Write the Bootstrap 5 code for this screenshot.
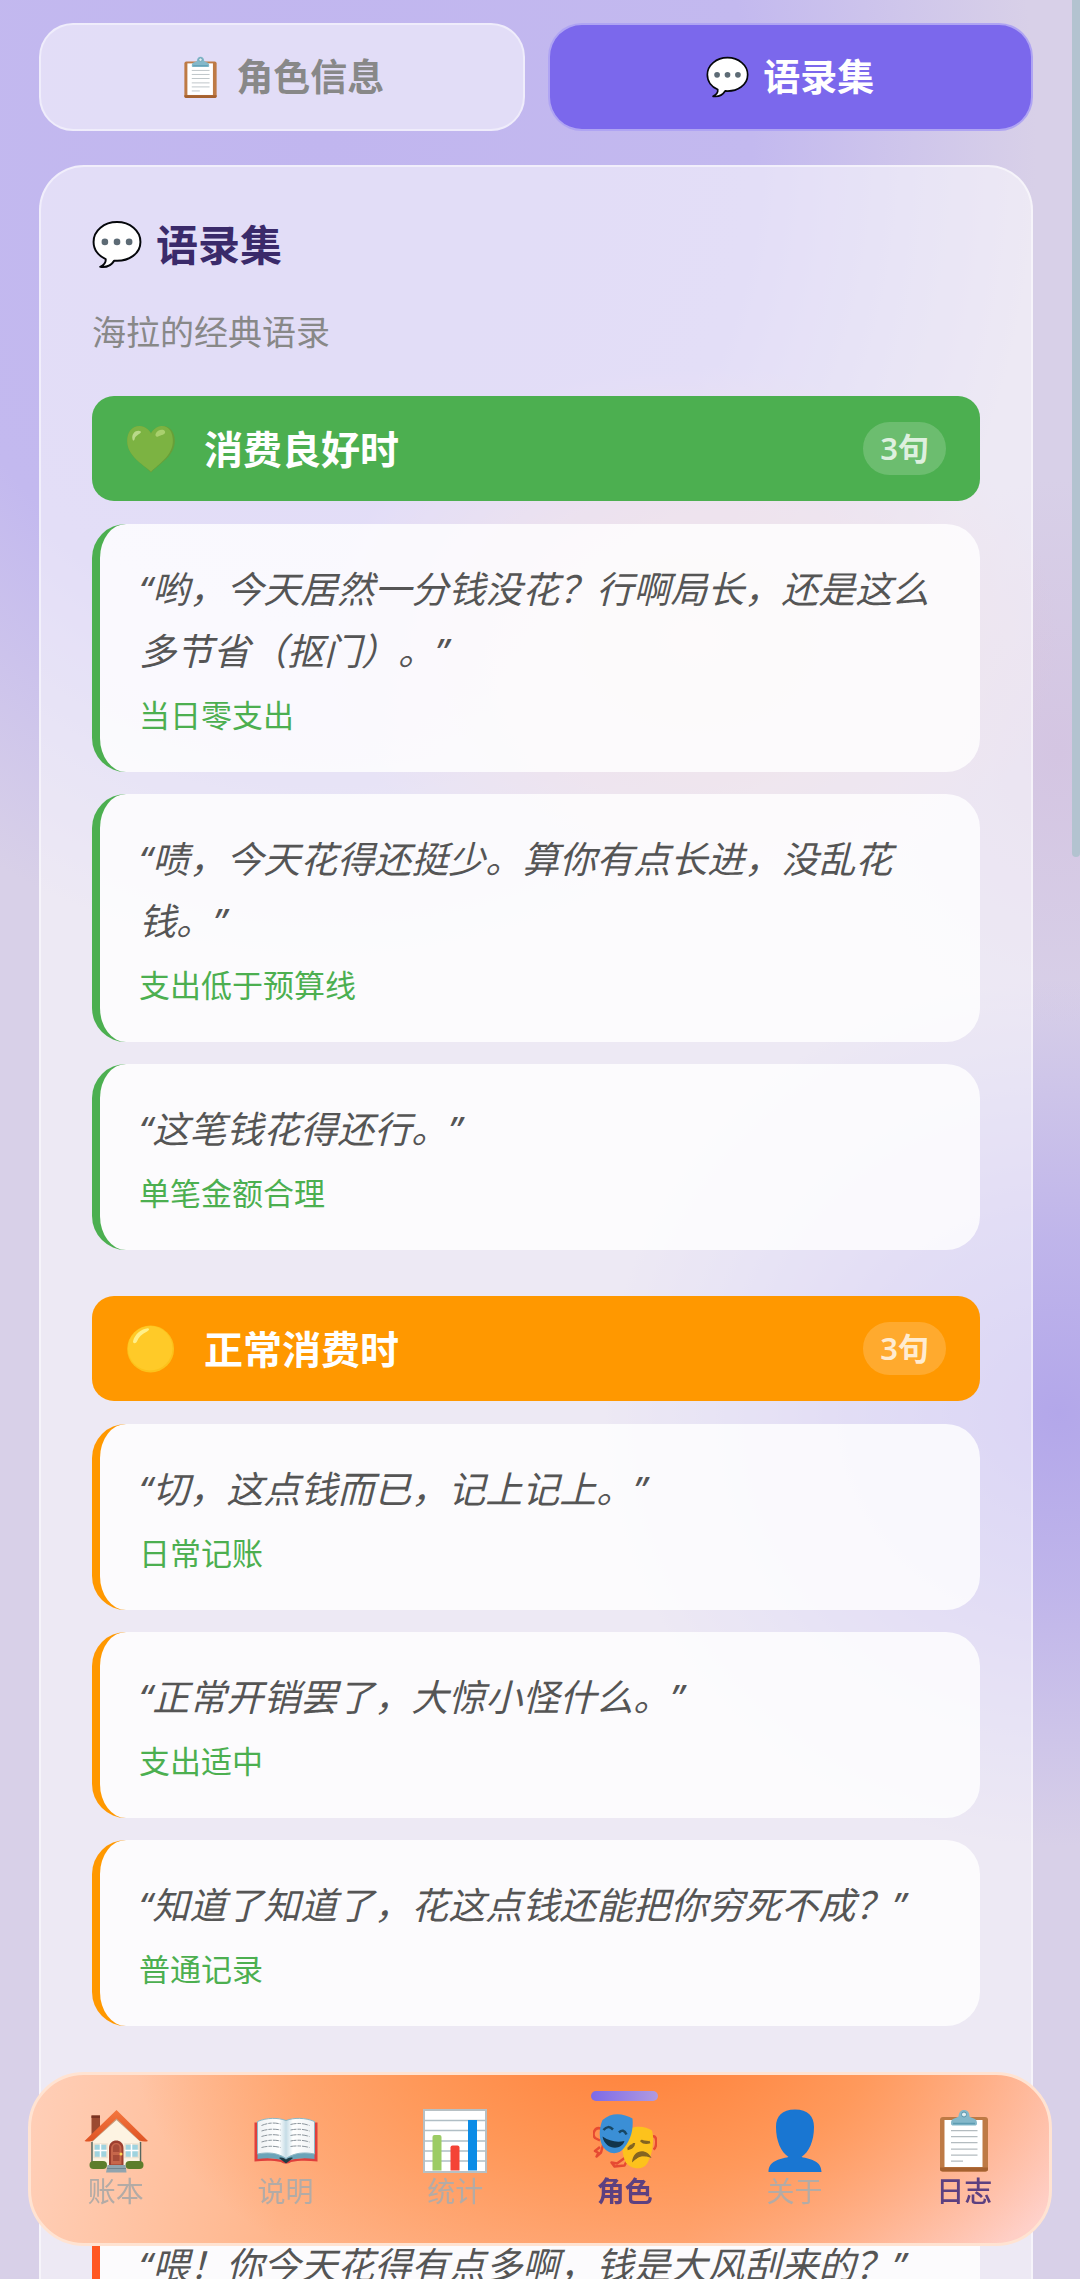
<!DOCTYPE html>
<html lang="zh-CN">
<head>
<meta charset="utf-8">
<meta name="viewport" content="width=device-width, initial-scale=1">
<title>语录集</title>
<link href="https://cdn.jsdelivr.net/npm/bootstrap@5.3.0/dist/css/bootstrap.min.css" rel="stylesheet">
<style>
  body { font-family: "Noto Sans", "Noto Sans CJK SC", sans-serif; height: 100vh; overflow: hidden; color: #555; text-spacing-trim: space-all; }
  .backdrop {
    height: 100vh; overflow: hidden;
    background:
      radial-gradient(ellipse 42% 19% at 98% 62%, #b3a7ea 0%, #b9aeebcc 40%, #d8d0e800 100%),
      radial-gradient(ellipse 34% 12% at 64% 28%, #e4c6d0 0%, #e0c5d6aa 55%, #d8d0e800 100%),
      radial-gradient(ellipse 20% 12% at 98% 33%, #d4c5e2 0%, #d8d0e800 100%),
      radial-gradient(ellipse 66% 36% at 30% 6%, #c1b6ef 0%, #c3b9ef 60%, #d8d0e800 100%),
      #d8d0e8;
  }
  .page-wrap { padding: 23px 47px 0 39px; }
  .emo { width: 1em; height: 1em; flex: none; }
  .tab-btn {
    height: 108px; border: 2px solid rgba(255,255,255,.45); border-radius: 34px;
    background: rgba(255,255,255,.53); color: #888; font-size: 37px; font-weight: 700; gap: 14px;
  }
  .tab-btn .emo { font-size: 43px; }
  .tab-btn.active, .tab-btn.active:hover { background: #7b68ec; color: #fff; border-color: rgba(255,255,255,.4); }
  .tab-row { gap: 23px; margin-bottom: 34px; }
  .panel { background: rgba(255,255,255,.53); border: 2px solid rgba(255,255,255,.5); border-radius: 45px; padding: 51px; }
  .panel-title { font-size: 42px; line-height: 54px; font-weight: 700; color: #3a2a6a; gap: 14px; margin: 0 0 33px; }
  .panel-title .emo { font-size: 50px; }
  .panel-sub { font-size: 34px; line-height: 54px; color: #888; margin: 0 0 37px; }
  .mood { margin-bottom: 46px; --tone: #4caf50; }
  .mood.normal { --tone: #ff9800; }
  .mood.over { --tone: #ff5722; }
  .mood-head { height: 105px; padding: 0 34px; border-radius: 22px; background: var(--tone); color: #fff; gap: 28px; margin-bottom: 23px; }
  .mood-head .emo { font-size: 50px; }
  .mood-head h2 { font-size: 39px; line-height: 60px; font-weight: 700; margin: 0; }
  .tally { font-size: 31px; line-height: 53px; font-weight: 600; border-radius: 27px; padding: 0 17px; background: rgba(255,255,255,.18); color: rgba(255,255,255,.8); }
  .quote { border-left: 8px solid var(--tone); border-radius: 34px; background: rgba(255,255,255,.8); padding: 34px 39px; margin: 0 0 22px; }
  .quote p { font-size: 37px; line-height: 62px; font-style: italic; color: #555; margin: 0 0 10px; }
  .quote footer { font-size: 31px; line-height: 46px; color: #4caf50; }
  .dock {
    left: 28px; right: 28px; bottom: 33px; border: 3px solid #ffe3d2; border-radius: 56px; padding: 34px 0;
    background:
      radial-gradient(ellipse 50% 170% at 60% -20%, #ff8038 0%, #ff9350dd 45%, #ffaa7a00 100%),
      linear-gradient(100deg, #ffcfb8 0%, #ffb68c 26%, #ffb088 65%, #ffc6b4 86%, #ffd2cc 100%);
  }
  .dock a { flex: 1 1 0; color: #b3aba6; font-size: 28px; line-height: 36px; text-decoration: none; }
  .dock a.on { color: #5d4080; font-weight: 700; }
  .dock a.lit { color: #5d4080; font-weight: 500; }
  .dock .emo { font-size: 64px; }
  .dock a.on::before { content: ""; position: absolute; top: -18px; left: 50%; width: 67px; height: 10px; margin-left: -34px; border-radius: 5px; background: linear-gradient(90deg, #7d6ae8, #b09ae0); }
  .thumb { top: 0; right: 0; width: 8px; height: 857px; background: #b3c3d0; border-radius: 0 0 4px 4px; }
</style>
<script src="https://cdn.jsdelivr.net/npm/bootstrap@5.3.0/dist/js/bootstrap.bundle.min.js"></script>
</head>
<body>
<svg width="0" height="0" class="position-absolute" aria-hidden="true">
  <defs>
    <linearGradient id="roof" x1="0" y1="0" x2="0" y2="1"><stop offset="0" stop-color="#f4773f"/><stop offset="1" stop-color="#df5425"/></linearGradient>
    <linearGradient id="page" x1="0" y1="0" x2="1" y2="0"><stop offset="0" stop-color="#eef1f3"/><stop offset=".38" stop-color="#fff"/><stop offset=".5" stop-color="#c5dce6"/><stop offset=".62" stop-color="#fff"/><stop offset="1" stop-color="#eef1f3"/></linearGradient>
  </defs>
  <symbol id="clip" viewBox="0 0 128 128">
    <rect x="16" y="16" width="96" height="109" rx="6" fill="#be7a45"/>
    <path d="M16 117v3a5 5 0 0 0 5 5h86a5 5 0 0 0 5-5v-3z" fill="#a5612f"/>
    <rect x="25" y="22" width="76" height="94" fill="#fff"/>
    <path d="M38 43h53M38 55h53M38 67h53M38 80h53M38 92h53M38 104h24" stroke="#b4bcc0" stroke-width="2.5"/>
    <path d="M38 29c0-12 9-9 15-14 1-8 4-13 11-13s11 5 11 13c6 5 15 2 15 14 0 3-2 4-4 4H42c-2 0-4-1-4-4z" fill="#84b8ca"/>
    <circle cx="64" cy="11" r="5" fill="#e0eef2" stroke="#5994aa" stroke-width="2"/>
    <path d="M42 29h44" stroke="#5d9db3" stroke-width="3"/>
  </symbol>
  <symbol id="talk" viewBox="0 0 128 128">
    <path d="M64 5C31 5 4 27 4 56c0 21 14 37 31 44 1 8-4 15-14 20 14 2 28-3 36-16 37 3 67-18 67-48C124 27 97 5 64 5z" fill="#fff" stroke="#05070b" stroke-width="5" stroke-linejoin="round"/>
    <g fill="#5d6b75"><circle cx="33" cy="56" r="8.5"/><circle cx="64" cy="56" r="8.5"/><circle cx="95" cy="56" r="8.5"/></g>
  </symbol>
  <symbol id="heart" viewBox="0 0 128 128">
    <path d="M93 5C79 5 69 15 64 24 59 15 49 5 35 5 13 5 3 23 3 43c0 38 37 58 61 81 24-23 61-43 61-81C125 23 115 5 93 5z" fill="#689f38"/>
    <path d="M91 5C79 5 69 15 64 24 59 15 49 5 35 5 13 5 3 23 3 43c0 38 37 58 61 79 22-21 56-42 56-79C120 23 112 5 91 5z" fill="#7cb342"/>
    <path d="M17 40c-5-18 12-27 21-21 3 5-15 9-16 20-1 4-4 5-5 1z" fill="#b9d98a"/>
    <path d="M76 25c4-9 18-14 24-6 2 8-10 9-18 13-5 2-8-3-6-7z" fill="#a9d06e"/>
  </symbol>
  <symbol id="ball" viewBox="0 0 128 128">
    <circle cx="63" cy="64" r="60" fill="#fcc21b"/><circle cx="62" cy="62" r="57" fill="#ffca28"/>
    <path d="M18 44c5-18 21-32 38-33 5 1 3 6-2 8-13 6-22 15-26 26-3 6-11 5-10-1z" fill="#fff08a"/>
  </symbol>
  <symbol id="home" viewBox="0 0 128 128">
    <path d="M15 13h17v30L15 60z" fill="#9b4a31"/><path d="M15 13h17v5H15z" fill="#7a3423"/>
    <path d="M65 22 113 64v53H16V64z" fill="#fdf3e2"/>
    <path d="M65 22 16 66v-8l49-47 48 47v8z" fill="#c3a184"/>
    <path d="M65 2 1 64c5 2 12 1 17-1l47-44 46 44c6 2 12 3 17 1z" fill="url(#roof)"/>
    <path d="M16 66v50M113 66v50" stroke="#56675f" stroke-width="3"/>
    <path d="M50 113V78c0-20 29-20 29 0v35z" fill="#9d3f2f"/><path d="M54 111V79c0-15 21-15 21 0v32z" fill="#c6664b"/>
    <path d="M58 77c0-9 13-9 13 0v9H58zM58 92h13v12H58z" fill="#a74c39"/><circle cx="74" cy="90" r="3" fill="#ffd54f"/>
    <path d="M20 70h26v27H20zM82 70h27v27H82z" fill="#9fd3df" stroke="#eee2d0" stroke-width="3"/>
    <path d="M33 70v27M20 83h26M95 70v27M82 83h27" stroke="#fff" stroke-width="3"/>
    <rect x="11" y="104" width="35" height="16" rx="8" fill="#5d7d2b"/><rect x="83" y="104" width="36" height="16" rx="8" fill="#5d7d2b"/>
    <path d="M47 112h36l2 15H44z" fill="#90a4ae"/><path d="M46 119h38" stroke="#70858f" stroke-width="2"/>
  </symbol>
  <symbol id="book" viewBox="0 0 128 128">
    <path d="M1 27h13v70l50 4 50-4V27h13v78c-20-2-38-2-53 1-6 4-14 4-20 0-15-3-33-3-53-1z" fill="#df3f3c"/>
    <path d="M7 88h114v12c-20-3-38-2-57 5-19-7-37-8-57-5z" fill="#6ba4b9"/>
    <path d="M7 25c19-8 41-8 57-2 16-6 38-6 57 2v65c-20-4-40-3-57 9-17-12-37-13-57-9z" fill="url(#page)" stroke="#8db7c5" stroke-width="2"/>
    <path d="M15 33q19-8 38-3M15 44q19-6 38-2M15 55q19-6 38-2M15 66q19-6 38-2M15 77q19-5 38 0M73 31q19-5 38 2M73 42q19-4 38 2M73 53q19-4 38 2M73 64q19-4 38 2M73 75q19-3 38 2" fill="none" stroke="#8b949b" stroke-width="2" stroke-dasharray="12 2 7 2"/>
    <path d="M50 98c5-2 9 0 14 3 5-3 9-5 14-3l-14 11z" fill="#203b45"/>
  </symbol>
  <symbol id="chart" viewBox="0 0 128 128">
    <rect x="2" y="2" width="124" height="124" fill="#fff" stroke="#b7c0c4" stroke-width="4"/>
    <path d="M3 23h122M3 43h122M3 64h122M3 84h122M3 104h122" stroke="#b0bec5" stroke-width="3"/>
    <path d="M19 123V56q0-4 4-4h10q4 0 4 4v67z" fill="#9ccc65"/><path d="M55 123V77q0-4 4-4h10q4 0 4 4v46z" fill="#f44336"/><path d="M90 123V22h18v101z" fill="#0c8ce6"/>
  </symbol>
  <symbol id="masks" viewBox="0 0 128 128">
    <path d="M16 39C2 35-2 51 4 58l10 5M14 76 4 84l7 4-4 7 9-8 4-15M66 96l-18 13-11-2 6 8 20-2 7-14M120 55c9-3 8 22 1 26" fill="none" stroke="#e64a32" stroke-width="5" stroke-linejoin="round"/>
    <path d="M65 48c12-17 39-14 53-5 4 15 3 42-8 63-8 19-38 15-46-2-7-19-7-40 1-56z" fill="#fdc21c"/>
    <path d="M19 22c19-17 42-13 60-3 2 22-3 42-17 59-12 16-34 13-44-6-7-17-5-36 1-50z" fill="#3b8fd6"/>
    <path d="M21 42q9-11 19-1M52 47q9-9 15 4" fill="none" stroke="#174765" stroke-width="5"/>
    <path d="M19 55q20 14 44 9c-6 20-39 18-44-9z" fill="#12354c"/>
    <path d="M69 80q12-2 13-12M96 63q7 7 18 3" fill="none" stroke="#846421" stroke-width="5"/><path d="M69 78q6-10 12-7l-3 8zM94 62l18 2q-8 9-18-2z" fill="#846421"/>
    <path d="M78 107c2-29 31-28 39-9-11-5-26-5-39 9z" fill="#846421"/><path d="M84 105c8-8 20-9 29-4-9-9-23-8-29 4z" fill="#fdc21c"/>
  </symbol>
  <symbol id="person" viewBox="0 0 128 128">
    <path d="M64 1C38 1 26 14 26 36c0 28 10 50 25 60-19 4-40 8-40 30h106c0-22-21-26-40-30 15-10 25-32 25-60C102 14 90 1 64 1z" fill="#1976d2"/>
  </symbol>
</svg>

<div class="backdrop">
  <div class="page-wrap">
    <div class="tab-row d-flex">
      <button type="button" class="tab-btn flex-fill w-50 d-flex align-items-center justify-content-center"><svg class="emo"><use href="#clip"/></svg>角色信息</button>
      <button type="button" class="tab-btn active flex-fill w-50 d-flex align-items-center justify-content-center"><svg class="emo"><use href="#talk"/></svg>语录集</button>
    </div>

    <main class="panel">
      <h1 class="panel-title d-flex align-items-center"><svg class="emo"><use href="#talk"/></svg>语录集</h1>
      <p class="panel-sub">海拉的经典语录</p>

      <section class="mood">
        <div class="mood-head d-flex align-items-center"><svg class="emo"><use href="#heart"/></svg><h2>消费良好时</h2><span class="tally ms-auto">3句</span></div>
        <blockquote class="quote"><p>“哟，今天居然一分钱没花？行啊局长，还是这么多节省（抠门）。”</p><footer>当日零支出</footer></blockquote>
        <blockquote class="quote"><p>“啧，今天花得还挺少。算你有点长进，没乱花钱。”</p><footer>支出低于预算线</footer></blockquote>
        <blockquote class="quote"><p>“这笔钱花得还行。”</p><footer>单笔金额合理</footer></blockquote>
      </section>

      <section class="mood normal">
        <div class="mood-head d-flex align-items-center"><svg class="emo"><use href="#ball"/></svg><h2>正常消费时</h2><span class="tally ms-auto">3句</span></div>
        <blockquote class="quote"><p>“切，这点钱而已，记上记上。”</p><footer>日常记账</footer></blockquote>
        <blockquote class="quote"><p>“正常开销罢了，大惊小怪什么。”</p><footer>支出适中</footer></blockquote>
        <blockquote class="quote"><p>“知道了知道了，花这点钱还能把你穷死不成？”</p><footer>普通记录</footer></blockquote>
      </section>

      <section class="mood over">
        <div class="mood-head"></div>
        <blockquote class="quote"><p>“喂！你今天花得有点多啊，钱是大风刮来的？”</p></blockquote>
      </section>
    </main>
  </div>
</div>

<div class="thumb position-fixed"></div>

<nav class="dock position-fixed d-flex">
  <a href="#" class="d-flex flex-column align-items-center"><svg class="emo"><use href="#home"/></svg>账本</a>
  <a href="#" class="d-flex flex-column align-items-center"><svg class="emo"><use href="#book"/></svg>说明</a>
  <a href="#" class="d-flex flex-column align-items-center"><svg class="emo"><use href="#chart"/></svg>统计</a>
  <a href="#" class="on position-relative d-flex flex-column align-items-center"><svg class="emo"><use href="#masks"/></svg>角色</a>
  <a href="#" class="d-flex flex-column align-items-center"><svg class="emo"><use href="#person"/></svg>关于</a>
  <a href="#" class="lit d-flex flex-column align-items-center"><svg class="emo"><use href="#clip"/></svg>日志</a>
</nav>
</body>
</html>
